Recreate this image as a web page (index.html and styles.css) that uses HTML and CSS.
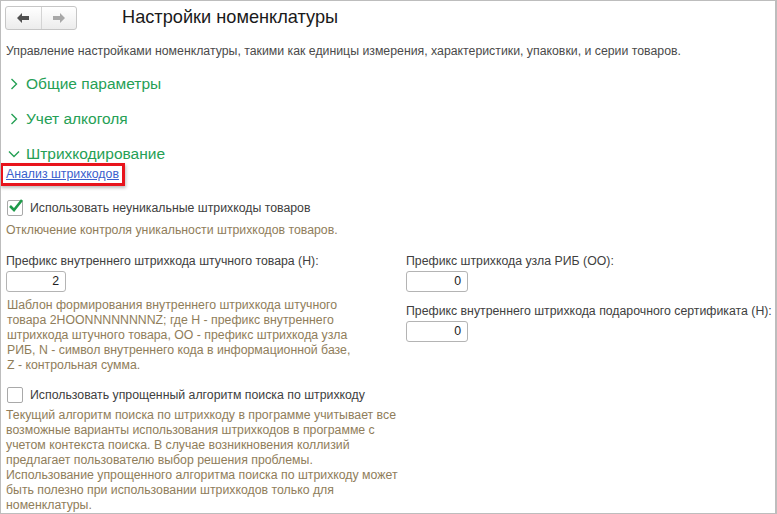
FILE: index.html
```html
<!DOCTYPE html>
<html lang="ru">
<head>
    <meta charset="UTF-8">
    <meta name="viewport" content="width=device-width, initial-scale=1.0">
    <title>Настройки номенклатуры</title>
    <link rel="stylesheet" href="styles.css">
</head>
<body>
    <div id="window">
        <div class="header">
            <div class="navButtons">
                <div class="navBtn">
                    <svg width="12" height="10" viewBox="0 0 12 10"><path d="M0 5 L5 0 L5 3 L12 3 L12 7 L5 7 L5 10 Z" fill="#505050"/></svg>
                </div>
                <div class="navBtn">
                    <svg width="12" height="10" viewBox="0 0 12 10"><path d="M12 5 L7 0 L7 3 L0 3 L0 7 L7 7 L7 10 Z" fill="#a8a8a8"/></svg>
                </div>
            </div>
            <div class="title">Настройки номенклатуры</div>
        </div>

        <p class="description">Управление настройками номенклатуры, такими как единицы измерения, характеристики, упаковки, и серии товаров.</p>

        <div class="group">
            <svg class="chevron" width="8" height="12" viewBox="0 0 8 12"><path d="M1.5 1 L6.5 6 L1.5 11" fill="none" stroke="#25a055" stroke-width="1.4"/></svg>
            <span>Общие параметры</span>
        </div>
        <div class="group">
            <svg class="chevron" width="8" height="12" viewBox="0 0 8 12"><path d="M1.5 1 L6.5 6 L1.5 11" fill="none" stroke="#25a055" stroke-width="1.4"/></svg>
            <span>Учет алкоголя</span>
        </div>
        <div class="group open">
            <svg class="chevron" width="12" height="8" viewBox="0 0 12 8"><path d="M1 1.5 L6 6.5 L11 1.5" fill="none" stroke="#25a055" stroke-width="1.4"/></svg>
            <span>Штрихкодирование</span>
        </div>

        <div class="linkRow">
            <span class="highlight"><a href="#">Анализ штрихкодов</a></span>
        </div>

        <div class="checkRow">
            <div class="checkbox">
                <svg width="16" height="14" viewBox="0 0 16 14"><path d="M2 7 L6 11 L14 1" fill="none" stroke="#1f9a4a" stroke-width="2.6"/></svg>
            </div>
            <span>Использовать неуникальные штрихкоды товаров</span>
        </div>
        <p class="hint">Отключение контроля уникальности штрихкодов товаров.</p>

        <div class="columns">
            <div class="leftCol">
                <div class="fieldLabel">Префикс внутреннего штрихкода штучного товара (Н):</div>
                <div class="input">2</div>
                <p class="hint para">Шаблон формирования внутреннего штрихкода штучного товара 2HOONNNNNNNNZ; где H - префикс внутреннего штрихкода штучного товара, OO - префикс штрихкода узла РИБ, N - символ внутреннего кода в информационной базе, Z - контрольная сумма.</p>
            </div>
            <div class="rightCol">
                <div class="fieldLabel">Префикс штрихкода узла РИБ (ОО):</div>
                <div class="input">0</div>
                <div class="fieldLabel">Префикс внутреннего штрихкода подарочного сертификата (Н):</div>
                <div class="input">0</div>
            </div>
        </div>

        <div class="checkRow second">
            <div class="checkbox"></div>
            <span>Использовать упрощенный алгоритм поиска по штрихкоду</span>
        </div>
        <p class="hint para wide">Текущий алгоритм поиска по штрихкоду в программе учитывает все возможные варианты использования штрихкодов в программе с учетом контекста поиска. В случае возникновения коллизий предлагает пользователю выбор решения проблемы. Использование упрощенного алгоритма поиска по штрихкоду может быть полезно при использовании штрихкодов только для номенклатуры.</p>
    </div>
</body>
</html>
```

FILE: styles.css
```css
html, body {
    margin: 0;
    padding: 0;
    background: #ffffff;
}
#window {
    box-sizing: border-box;
    width: 777px;
    height: 514px;
    border: 1px solid #bdbdbd;
    border-right-width: 2px;
    padding: 4px 0 0 4px;
    font-family: "Liberation Sans", Arial, sans-serif;
    font-size: 12.3px;
    color: #404040;
    overflow: hidden;
}
.header {
    display: flex;
    align-items: center;
    height: 25px;
}
.navButtons {
    display: flex;
    width: 72px;
    height: 24px;
    box-sizing: border-box;
    border: 1px solid #c6c6c6;
    border-radius: 3px;
    background: linear-gradient(#ffffff, #ececec);
}
.navBtn {
    flex: 1;
    display: flex;
    align-items: center;
    justify-content: center;
}
.navBtn + .navBtn {
    border-left: 1px solid #d4d4d4;
}
.title {
    margin-left: 45px;
    font-size: 18.2px;
    color: #1a1a1a;
}
.description {
    margin: 14px 0 0 1px;
    color: #4a4a4a;
}
.group {
    display: flex;
    align-items: center;
    height: 35px;
    color: #25a055;
    font-size: 15.5px;
}
.description + .group {
    margin-top: 8px;
}
.chevron {
    margin: 0 8px 0 5px;
}
.group.open .chevron {
    margin: 0 6px 0 3px;
}
.linkRow {
    margin: -8px 0 0 -5px;
    height: 27px;
}
.highlight {
    display: inline-block;
    border: 3px solid #e8141c;
    padding: 1px 3px 2px 3px;
    box-shadow: 1px 2px 3px rgba(0, 0, 0, 0.25);
}
.highlight a {
    color: #3a5fcd;
}
.checkRow {
    display: flex;
    align-items: center;
    margin-top: 9px;
    height: 18px;
}
.checkbox {
    position: relative;
    width: 14px;
    height: 14px;
    margin: 0 7px 0 2px;
    border: 1px solid #a9a9a9;
    border-radius: 2px;
    background: #fff;
}
.checkbox svg {
    position: absolute;
    left: 0;
    top: -2px;
}
.hint {
    margin: 6px 0 0 1px;
    color: #8f7d5a;
}
.columns {
    display: flex;
    margin-top: 17px;
}
.leftCol {
    flex: none;
    width: 355px;
    margin-left: 1px;
}
.rightCol {
    margin-left: 45px;
    white-space: nowrap;
}
.fieldLabel {
    height: 15px;
}
.input {
    box-sizing: border-box;
    width: 60px;
    height: 21px;
    margin-top: 2px;
    border: 1px solid #b4b4b4;
    border-radius: 3px;
    text-align: right;
    padding: 2px 6px 0 0;
    color: #222;
}
.rightCol .input + .fieldLabel {
    margin-top: 12px;
}
.rightCol .input {
    width: 62px;
}
.hint.para {
    margin-top: 6px;
    line-height: 15px;
}
.checkRow.second {
    margin-top: 13px;
}
.hint.wide {
    width: 395px;
    margin-top: 4px;
}
```
